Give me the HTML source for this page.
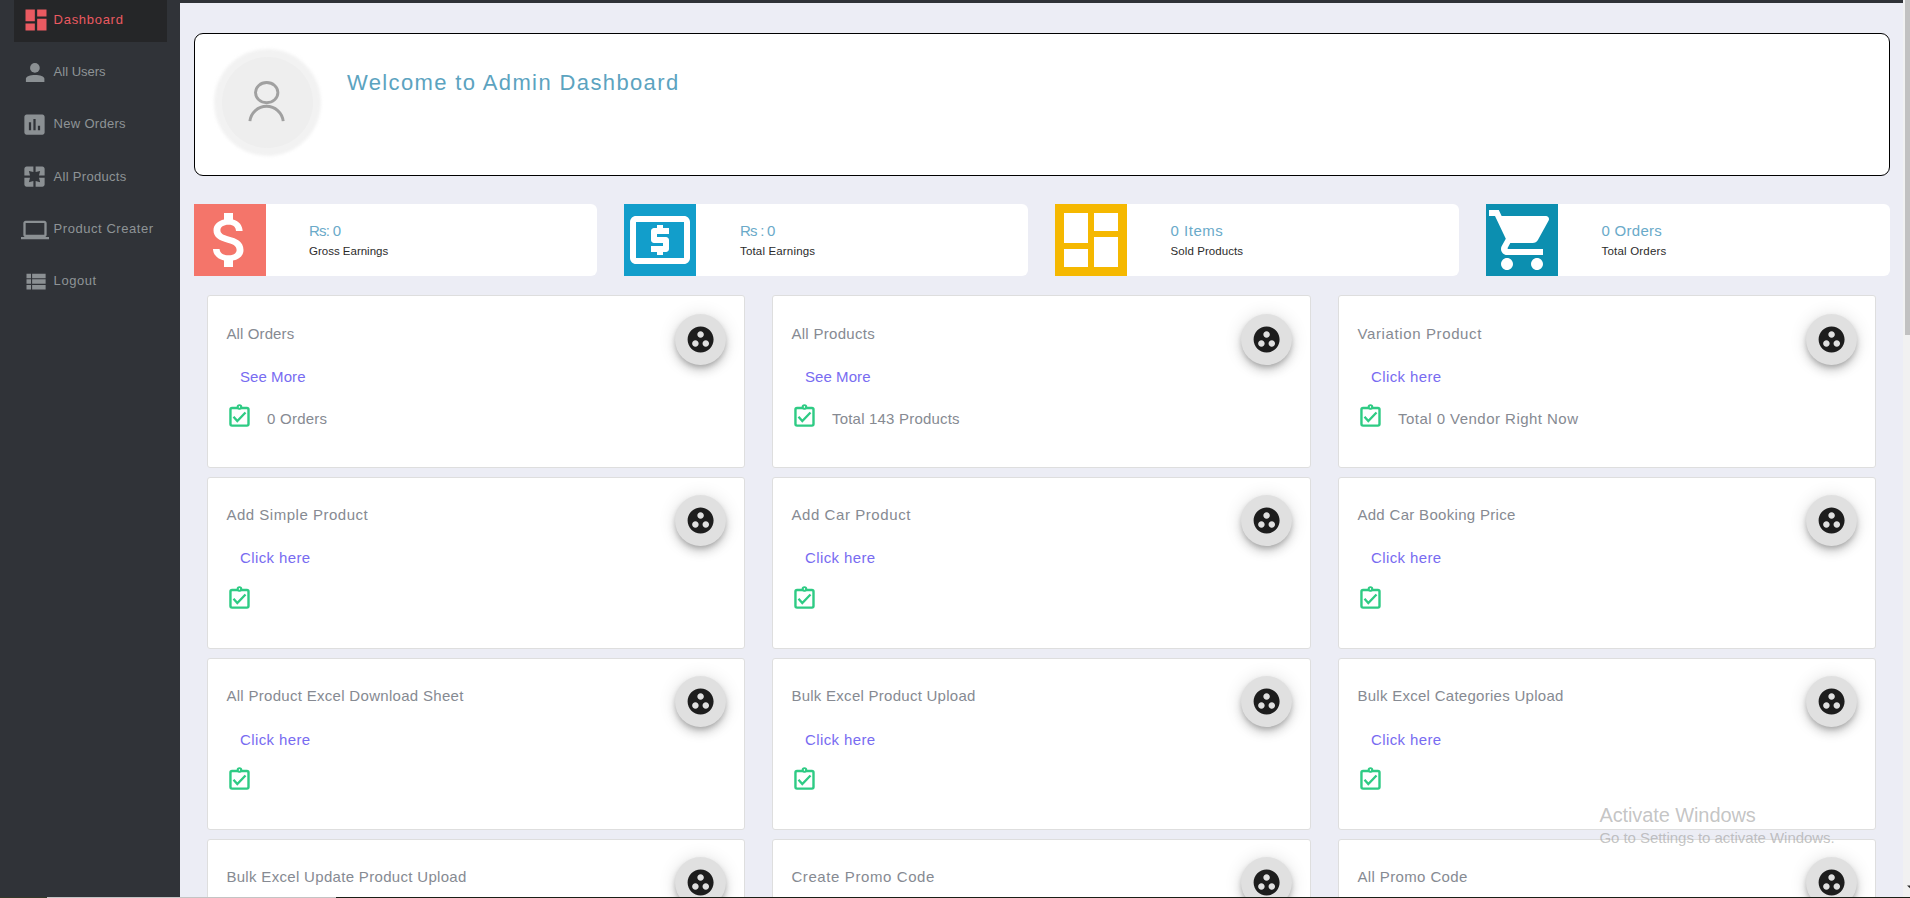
<!DOCTYPE html>
<html><head><meta charset="utf-8"><title>Admin Dashboard</title>
<style>
html,body{margin:0;padding:0;}
body{width:1910px;height:898px;overflow:hidden;position:relative;background:#ecedf5;font-family:"Liberation Sans",sans-serif;}
.t{position:absolute;white-space:nowrap;line-height:1;}
.i{position:absolute;display:block;overflow:visible;}
.fab{position:absolute;width:51px;height:51px;border-radius:50%;background:#e0e0e0;box-shadow:0 3px 5px -1px rgba(0,0,0,.2),0 6px 10px 0 rgba(0,0,0,.14),0 1px 18px 0 rgba(0,0,0,.12);}
</style></head><body>
<div style="position:absolute;left:0;top:0;width:180px;height:898px;background:#303338"></div>
<div style="position:absolute;left:14px;top:0;width:153px;height:42px;background:#252628"></div>
<svg class="i" style="left:20px;top:58px" width="30" height="30" viewBox="20 58 30 30"><circle cx="34.9" cy="67.9" r="4.85" fill="#8b9093"/><path d="M25.9 81.9V78.7C25.9 76.2 30.2 74.9 35.1 74.9S44.4 76.2 44.4 78.7V81.9Z" fill="#8b9093"/></svg>
<svg class="i" style="left:21.80px;top:6.40px" width="28" height="28" viewBox="0 0 24 24"><path fill="#ea5a61" d="M3 13h8V3H3v10zm0 8h8v-6H3v6zm10 0h8V11h-8v10zm0-18v6h8V3h-8z"/></svg>
<svg class="i" style="left:21.10px;top:110.70px" width="27" height="27" viewBox="0 0 24 24"><path fill="#8b9093" d="M19 3H5c-1.1 0-2 .9-2 2v14c0 1.1.9 2 2 2h14c1.1 0 2-.9 2-2V5c0-1.1-.9-2-2-2zM9 17H7v-7h2v7zm4 0h-2V7h2v10zm4 0h-2v-4h2v4z"/></svg>
<svg class="i" style="left:21.20px;top:162.90px" width="27" height="27" viewBox="0 0 24 24"><path fill="#8b9093" d="M3 5v6h5L7 7l4 1V3H5c-1.1 0-2 .9-2 2zm5 8H3v6c0 1.1.9 2 2 2h6v-5l-4 1 1-4zm9 4l-4-1v5h6c1.1 0 2-.9 2-2v-6h-5l1 4zm2-14h-6v5l4-1-1 4h5V5c0-1.1-.9-2-2-2z"/></svg>
<svg class="i" style="left:21.00px;top:215.60px" width="28" height="28" viewBox="0 0 24 24"><path fill="#8b9093" d="M20 18c1.1 0 1.99-.9 1.99-2L22 6c0-1.1-.9-2-2-2H4c-1.1 0-2 .9-2 2v10c0 1.1.9 2 2 2H0v2h24v-2h-4zM4 6h16v10H4V6z"/></svg>
<svg class="i" style="left:21.50px;top:267.80px" width="27" height="27" viewBox="0 0 24 24"><path fill="#8b9093" d="M4 14h4v-4H4v4zm0 5h4v-4H4v4zM4 9h4V5H4v4zm5 5h12v-4H9v4zm0 5h12v-4H9v4zM9 5v4h12V5H9z"/></svg>
<div style="position:absolute;left:180px;top:0;width:1723px;height:3px;background:#2f3237"></div>
<div style="position:absolute;left:1903px;top:0;width:7px;height:898px;background:#f1f1f1"></div>
<div style="position:absolute;left:1905px;top:0;width:5px;height:335px;background:#c1c1c1"></div>
<div style="position:absolute;left:194px;top:33px;width:1694px;height:141px;border:1px solid #000;border-radius:9px;background:#fff"></div>
<div style="position:absolute;left:214px;top:48.5px;width:107px;height:107px;border-radius:50%;background:#f2f2f2;filter:blur(1.5px)"></div>
<div style="position:absolute;left:222px;top:56.5px;width:91px;height:91px;border-radius:50%;background:#eeeeee"></div>
<svg class="i" style="left:207px;top:42px" width="120" height="120" viewBox="207 42 120 120"><ellipse cx="266.7" cy="92.6" rx="11.2" ry="10.1" fill="none" stroke="#a0a0a0" stroke-width="2.9"/><path d="M249.9 121.2A16.75 16.75 0 0 1 283.2 121.2" fill="none" stroke="#a0a0a0" stroke-width="2.9"/></svg>
<div style="position:absolute;left:194px;top:204px;width:403px;height:72px;background:#fff;border-radius:0 6px 6px 0"></div>
<div style="position:absolute;left:194px;top:204px;width:72px;height:72px;background:#f4756a"></div>
<svg class="i" style="left:194.00px;top:204.00px" width="72" height="72" viewBox="0 0 24 24"><path fill="#fff" d="M11.8 10.9c-2.27-.59-3-1.2-3-2.15 0-1.09 1.01-1.85 2.7-1.850 1.78 0 2.44.85 2.5 2.1h2.21c-.07-1.72-1.12-3.3-3.21-3.81V3h-3v2.16c-1.94.42-3.5 1.68-3.5 3.61 0 2.31 1.91 3.46 4.7 4.13 2.5.6 3 1.48 3 2.41 0 .69-.49 1.79-2.7 1.79-2.06 0-2.87-.92-2.98-2.1h-2.2c.12 2.19 1.76 3.42 3.68 3.83V21h3v-2.15c1.95-.37 3.5-1.5 3.5-3.55 0-2.84-2.43-3.81-4.7-4.4z"/></svg>
<div style="position:absolute;left:624px;top:204px;width:404px;height:72px;background:#fff;border-radius:0 6px 6px 0"></div>
<div style="position:absolute;left:624px;top:204px;width:72px;height:72px;background:#129ecb"></div>
<svg class="i" style="left:624.00px;top:204.00px" width="72" height="72" viewBox="0 0 24 24"><path fill="#fff" d="M11 17h2v-1h1c.55 0 1-.45 1-1v-3c0-.55-.45-1-1-1h-3v-1h4V8h-2V7h-2v1h-1c-.55 0-1 .45-1 1v3c0 .55.45 1 1 1h3v1H9v2h2v1zm9-13H4c-1.11 0-1.99.89-1.99 2L2 18c0 1.11.89 2 2 2h16c1.11 0 2-.89 2-2V6c0-1.11-.89-2-2-2zm0 14H4V6h16v12z"/></svg>
<div style="position:absolute;left:1055px;top:204px;width:404px;height:72px;background:#fff;border-radius:0 6px 6px 0"></div>
<div style="position:absolute;left:1055px;top:204px;width:72px;height:72px;background:#f5b800"></div>
<svg class="i" style="left:1055.00px;top:204.00px" width="72" height="72" viewBox="0 0 24 24"><path fill="#fff" d="M3 13h8V3H3v10zm0 8h8v-6H3v6zm10 0h8V11h-8v10zm0-18v6h8V3h-8z"/></svg>
<div style="position:absolute;left:1486px;top:204px;width:404px;height:72px;background:#fff;border-radius:0 6px 6px 0"></div>
<div style="position:absolute;left:1486px;top:204px;width:72px;height:72px;background:#0c8fb0"></div>
<svg class="i" style="left:1486.00px;top:204.00px" width="72" height="72" viewBox="0 0 24 24"><path fill="#fff" d="M7 18c-1.1 0-1.99.9-1.99 2S5.9 22 7 22s2-.9 2-2-.9-2-2-2zM1 2v2h2l3.6 7.59-1.35 2.45c-.16.28-.25.61-.25.96 0 1.1.9 2 2 2h12v-2H7.42c-.14 0-.25-.11-.25-.25l.03-.12.9-1.63h7.45c.75 0 1.41-.41 1.75-1.03l3.58-6.49c.08-.14.12-.31.12-.48 0-.55-.45-1-1-1H5.21l-.94-2H1zm16 16c-1.1 0-1.99.9-1.99 2s.89 2 1.99 2 2-.9 2-2-.9-2-2-2z"/></svg>
<div style="position:absolute;left:207px;top:295px;width:536px;height:171px;border:1px solid #dedede;border-radius:3px;background:#fff"></div>
<div class="fab" style="left:675.3px;top:314.0px"></div>
<svg class="i" style="left:685.20px;top:324.10px" width="31.2" height="31.2" viewBox="0 0 24 24"><path fill="#1d1d1d" d="M12 2C6.48 2 2 6.48 2 12s4.48 10 10 10 10-4.48 10-10S17.52 2 12 2zM8 17.5c-1.38 0-2.5-1.12-2.5-2.5s1.12-2.5 2.5-2.5 2.5 1.12 2.5 2.5-1.12 2.5-2.5 2.5zM9.5 8c0-1.38 1.12-2.5 2.5-2.5s2.5 1.12 2.5 2.5-1.12 2.5-2.5 2.5S9.5 9.38 9.5 8zm6.5 9.5c-1.38 0-2.5-1.12-2.5-2.5s1.12-2.5 2.5-2.5 2.5 1.12 2.5 2.5-1.12 2.5-2.5 2.5z"/></svg>
<svg class="i" style="left:227.00px;top:402.40px" width="26" height="28" viewBox="0 0 26 28"><rect x="3.45" y="6.0" width="18.05" height="17.6" rx="1.6" fill="none" stroke="#2ecb84" stroke-width="2.4"/><circle cx="12.45" cy="5.0" r="2.8" fill="#2ecb84"/><ellipse cx="12.45" cy="4.9" rx=".7" ry=".95" fill="#fff"/><path d="M6.5 14.7l3.8 4.3 8.2-8.5" fill="none" stroke="#2ecb84" stroke-width="2.3"/></svg>
<div style="position:absolute;left:772px;top:295px;width:537px;height:171px;border:1px solid #dedede;border-radius:3px;background:#fff"></div>
<div class="fab" style="left:1241.3px;top:314.0px"></div>
<svg class="i" style="left:1251.20px;top:324.10px" width="31.2" height="31.2" viewBox="0 0 24 24"><path fill="#1d1d1d" d="M12 2C6.48 2 2 6.48 2 12s4.48 10 10 10 10-4.48 10-10S17.52 2 12 2zM8 17.5c-1.38 0-2.5-1.12-2.5-2.5s1.12-2.5 2.5-2.5 2.5 1.12 2.5 2.5-1.12 2.5-2.5 2.5zM9.5 8c0-1.38 1.12-2.5 2.5-2.5s2.5 1.12 2.5 2.5-1.12 2.5-2.5 2.5S9.5 9.38 9.5 8zm6.5 9.5c-1.38 0-2.5-1.12-2.5-2.5s1.12-2.5 2.5-2.5 2.5 1.12 2.5 2.5-1.12 2.5-2.5 2.5z"/></svg>
<svg class="i" style="left:792.00px;top:402.40px" width="26" height="28" viewBox="0 0 26 28"><rect x="3.45" y="6.0" width="18.05" height="17.6" rx="1.6" fill="none" stroke="#2ecb84" stroke-width="2.4"/><circle cx="12.45" cy="5.0" r="2.8" fill="#2ecb84"/><ellipse cx="12.45" cy="4.9" rx=".7" ry=".95" fill="#fff"/><path d="M6.5 14.7l3.8 4.3 8.2-8.5" fill="none" stroke="#2ecb84" stroke-width="2.3"/></svg>
<div style="position:absolute;left:1338px;top:295px;width:536px;height:171px;border:1px solid #dedede;border-radius:3px;background:#fff"></div>
<div class="fab" style="left:1806.3px;top:314.0px"></div>
<svg class="i" style="left:1816.20px;top:324.10px" width="31.2" height="31.2" viewBox="0 0 24 24"><path fill="#1d1d1d" d="M12 2C6.48 2 2 6.48 2 12s4.48 10 10 10 10-4.48 10-10S17.52 2 12 2zM8 17.5c-1.38 0-2.5-1.12-2.5-2.5s1.12-2.5 2.5-2.5 2.5 1.12 2.5 2.5-1.12 2.5-2.5 2.5zM9.5 8c0-1.38 1.12-2.5 2.5-2.5s2.5 1.12 2.5 2.5-1.12 2.5-2.5 2.5S9.5 9.38 9.5 8zm6.5 9.5c-1.38 0-2.5-1.12-2.5-2.5s1.12-2.5 2.5-2.5 2.5 1.12 2.5 2.5-1.12 2.5-2.5 2.5z"/></svg>
<svg class="i" style="left:1358.00px;top:402.40px" width="26" height="28" viewBox="0 0 26 28"><rect x="3.45" y="6.0" width="18.05" height="17.6" rx="1.6" fill="none" stroke="#2ecb84" stroke-width="2.4"/><circle cx="12.45" cy="5.0" r="2.8" fill="#2ecb84"/><ellipse cx="12.45" cy="4.9" rx=".7" ry=".95" fill="#fff"/><path d="M6.5 14.7l3.8 4.3 8.2-8.5" fill="none" stroke="#2ecb84" stroke-width="2.3"/></svg>
<div style="position:absolute;left:207px;top:477px;width:536px;height:170px;border:1px solid #dedede;border-radius:3px;background:#fff"></div>
<div class="fab" style="left:675.3px;top:495.0px"></div>
<svg class="i" style="left:685.20px;top:505.15px" width="31.2" height="31.2" viewBox="0 0 24 24"><path fill="#1d1d1d" d="M12 2C6.48 2 2 6.48 2 12s4.48 10 10 10 10-4.48 10-10S17.52 2 12 2zM8 17.5c-1.38 0-2.5-1.12-2.5-2.5s1.12-2.5 2.5-2.5 2.5 1.12 2.5 2.5-1.12 2.5-2.5 2.5zM9.5 8c0-1.38 1.12-2.5 2.5-2.5s2.5 1.12 2.5 2.5-1.12 2.5-2.5 2.5S9.5 9.38 9.5 8zm6.5 9.5c-1.38 0-2.5-1.12-2.5-2.5s1.12-2.5 2.5-2.5 2.5 1.12 2.5 2.5-1.12 2.5-2.5 2.5z"/></svg>
<svg class="i" style="left:227.00px;top:583.60px" width="26" height="28" viewBox="0 0 26 28"><rect x="3.45" y="6.0" width="18.05" height="17.6" rx="1.6" fill="none" stroke="#2ecb84" stroke-width="2.4"/><circle cx="12.45" cy="5.0" r="2.8" fill="#2ecb84"/><ellipse cx="12.45" cy="4.9" rx=".7" ry=".95" fill="#fff"/><path d="M6.5 14.7l3.8 4.3 8.2-8.5" fill="none" stroke="#2ecb84" stroke-width="2.3"/></svg>
<div style="position:absolute;left:772px;top:477px;width:537px;height:170px;border:1px solid #dedede;border-radius:3px;background:#fff"></div>
<div class="fab" style="left:1241.3px;top:495.0px"></div>
<svg class="i" style="left:1251.20px;top:505.15px" width="31.2" height="31.2" viewBox="0 0 24 24"><path fill="#1d1d1d" d="M12 2C6.48 2 2 6.48 2 12s4.48 10 10 10 10-4.48 10-10S17.52 2 12 2zM8 17.5c-1.38 0-2.5-1.12-2.5-2.5s1.12-2.5 2.5-2.5 2.5 1.12 2.5 2.5-1.12 2.5-2.5 2.5zM9.5 8c0-1.38 1.12-2.5 2.5-2.5s2.5 1.12 2.5 2.5-1.12 2.5-2.5 2.5S9.5 9.38 9.5 8zm6.5 9.5c-1.38 0-2.5-1.12-2.5-2.5s1.12-2.5 2.5-2.5 2.5 1.12 2.5 2.5-1.12 2.5-2.5 2.5z"/></svg>
<svg class="i" style="left:792.00px;top:583.60px" width="26" height="28" viewBox="0 0 26 28"><rect x="3.45" y="6.0" width="18.05" height="17.6" rx="1.6" fill="none" stroke="#2ecb84" stroke-width="2.4"/><circle cx="12.45" cy="5.0" r="2.8" fill="#2ecb84"/><ellipse cx="12.45" cy="4.9" rx=".7" ry=".95" fill="#fff"/><path d="M6.5 14.7l3.8 4.3 8.2-8.5" fill="none" stroke="#2ecb84" stroke-width="2.3"/></svg>
<div style="position:absolute;left:1338px;top:477px;width:536px;height:170px;border:1px solid #dedede;border-radius:3px;background:#fff"></div>
<div class="fab" style="left:1806.3px;top:495.0px"></div>
<svg class="i" style="left:1816.20px;top:505.15px" width="31.2" height="31.2" viewBox="0 0 24 24"><path fill="#1d1d1d" d="M12 2C6.48 2 2 6.48 2 12s4.48 10 10 10 10-4.48 10-10S17.52 2 12 2zM8 17.5c-1.38 0-2.5-1.12-2.5-2.5s1.12-2.5 2.5-2.5 2.5 1.12 2.5 2.5-1.12 2.5-2.5 2.5zM9.5 8c0-1.38 1.12-2.5 2.5-2.5s2.5 1.12 2.5 2.5-1.12 2.5-2.5 2.5S9.5 9.38 9.5 8zm6.5 9.5c-1.38 0-2.5-1.12-2.5-2.5s1.12-2.5 2.5-2.5 2.5 1.12 2.5 2.5-1.12 2.5-2.5 2.5z"/></svg>
<svg class="i" style="left:1358.00px;top:583.60px" width="26" height="28" viewBox="0 0 26 28"><rect x="3.45" y="6.0" width="18.05" height="17.6" rx="1.6" fill="none" stroke="#2ecb84" stroke-width="2.4"/><circle cx="12.45" cy="5.0" r="2.8" fill="#2ecb84"/><ellipse cx="12.45" cy="4.9" rx=".7" ry=".95" fill="#fff"/><path d="M6.5 14.7l3.8 4.3 8.2-8.5" fill="none" stroke="#2ecb84" stroke-width="2.3"/></svg>
<div style="position:absolute;left:207px;top:658px;width:536px;height:170px;border:1px solid #dedede;border-radius:3px;background:#fff"></div>
<div class="fab" style="left:675.3px;top:676.1px"></div>
<svg class="i" style="left:685.20px;top:686.20px" width="31.2" height="31.2" viewBox="0 0 24 24"><path fill="#1d1d1d" d="M12 2C6.48 2 2 6.48 2 12s4.48 10 10 10 10-4.48 10-10S17.52 2 12 2zM8 17.5c-1.38 0-2.5-1.12-2.5-2.5s1.12-2.5 2.5-2.5 2.5 1.12 2.5 2.5-1.12 2.5-2.5 2.5zM9.5 8c0-1.38 1.12-2.5 2.5-2.5s2.5 1.12 2.5 2.5-1.12 2.5-2.5 2.5S9.5 9.38 9.5 8zm6.5 9.5c-1.38 0-2.5-1.12-2.5-2.5s1.12-2.5 2.5-2.5 2.5 1.12 2.5 2.5-1.12 2.5-2.5 2.5z"/></svg>
<svg class="i" style="left:227.00px;top:764.80px" width="26" height="28" viewBox="0 0 26 28"><rect x="3.45" y="6.0" width="18.05" height="17.6" rx="1.6" fill="none" stroke="#2ecb84" stroke-width="2.4"/><circle cx="12.45" cy="5.0" r="2.8" fill="#2ecb84"/><ellipse cx="12.45" cy="4.9" rx=".7" ry=".95" fill="#fff"/><path d="M6.5 14.7l3.8 4.3 8.2-8.5" fill="none" stroke="#2ecb84" stroke-width="2.3"/></svg>
<div style="position:absolute;left:772px;top:658px;width:537px;height:170px;border:1px solid #dedede;border-radius:3px;background:#fff"></div>
<div class="fab" style="left:1241.3px;top:676.1px"></div>
<svg class="i" style="left:1251.20px;top:686.20px" width="31.2" height="31.2" viewBox="0 0 24 24"><path fill="#1d1d1d" d="M12 2C6.48 2 2 6.48 2 12s4.48 10 10 10 10-4.48 10-10S17.52 2 12 2zM8 17.5c-1.38 0-2.5-1.12-2.5-2.5s1.12-2.5 2.5-2.5 2.5 1.12 2.5 2.5-1.12 2.5-2.5 2.5zM9.5 8c0-1.38 1.12-2.5 2.5-2.5s2.5 1.12 2.5 2.5-1.12 2.5-2.5 2.5S9.5 9.38 9.5 8zm6.5 9.5c-1.38 0-2.5-1.12-2.5-2.5s1.12-2.5 2.5-2.5 2.5 1.12 2.5 2.5-1.12 2.5-2.5 2.5z"/></svg>
<svg class="i" style="left:792.00px;top:764.80px" width="26" height="28" viewBox="0 0 26 28"><rect x="3.45" y="6.0" width="18.05" height="17.6" rx="1.6" fill="none" stroke="#2ecb84" stroke-width="2.4"/><circle cx="12.45" cy="5.0" r="2.8" fill="#2ecb84"/><ellipse cx="12.45" cy="4.9" rx=".7" ry=".95" fill="#fff"/><path d="M6.5 14.7l3.8 4.3 8.2-8.5" fill="none" stroke="#2ecb84" stroke-width="2.3"/></svg>
<div style="position:absolute;left:1338px;top:658px;width:536px;height:170px;border:1px solid #dedede;border-radius:3px;background:#fff"></div>
<div class="fab" style="left:1806.3px;top:676.1px"></div>
<svg class="i" style="left:1816.20px;top:686.20px" width="31.2" height="31.2" viewBox="0 0 24 24"><path fill="#1d1d1d" d="M12 2C6.48 2 2 6.48 2 12s4.48 10 10 10 10-4.48 10-10S17.52 2 12 2zM8 17.5c-1.38 0-2.5-1.12-2.5-2.5s1.12-2.5 2.5-2.5 2.5 1.12 2.5 2.5-1.12 2.5-2.5 2.5zM9.5 8c0-1.38 1.12-2.5 2.5-2.5s2.5 1.12 2.5 2.5-1.12 2.5-2.5 2.5S9.5 9.38 9.5 8zm6.5 9.5c-1.38 0-2.5-1.12-2.5-2.5s1.12-2.5 2.5-2.5 2.5 1.12 2.5 2.5-1.12 2.5-2.5 2.5z"/></svg>
<svg class="i" style="left:1358.00px;top:764.80px" width="26" height="28" viewBox="0 0 26 28"><rect x="3.45" y="6.0" width="18.05" height="17.6" rx="1.6" fill="none" stroke="#2ecb84" stroke-width="2.4"/><circle cx="12.45" cy="5.0" r="2.8" fill="#2ecb84"/><ellipse cx="12.45" cy="4.9" rx=".7" ry=".95" fill="#fff"/><path d="M6.5 14.7l3.8 4.3 8.2-8.5" fill="none" stroke="#2ecb84" stroke-width="2.3"/></svg>
<div style="position:absolute;left:207px;top:839px;width:536px;height:170px;border:1px solid #dedede;border-radius:3px;background:#fff"></div>
<div class="fab" style="left:675.3px;top:857.2px"></div>
<svg class="i" style="left:685.20px;top:867.25px" width="31.2" height="31.2" viewBox="0 0 24 24"><path fill="#1d1d1d" d="M12 2C6.48 2 2 6.48 2 12s4.48 10 10 10 10-4.48 10-10S17.52 2 12 2zM8 17.5c-1.38 0-2.5-1.12-2.5-2.5s1.12-2.5 2.5-2.5 2.5 1.12 2.5 2.5-1.12 2.5-2.5 2.5zM9.5 8c0-1.38 1.12-2.5 2.5-2.5s2.5 1.12 2.5 2.5-1.12 2.5-2.5 2.5S9.5 9.38 9.5 8zm6.5 9.5c-1.38 0-2.5-1.12-2.5-2.5s1.12-2.5 2.5-2.5 2.5 1.12 2.5 2.5-1.12 2.5-2.5 2.5z"/></svg>
<svg class="i" style="left:227.00px;top:946.00px" width="26" height="28" viewBox="0 0 26 28"><rect x="3.45" y="6.0" width="18.05" height="17.6" rx="1.6" fill="none" stroke="#2ecb84" stroke-width="2.4"/><circle cx="12.45" cy="5.0" r="2.8" fill="#2ecb84"/><ellipse cx="12.45" cy="4.9" rx=".7" ry=".95" fill="#fff"/><path d="M6.5 14.7l3.8 4.3 8.2-8.5" fill="none" stroke="#2ecb84" stroke-width="2.3"/></svg>
<div style="position:absolute;left:772px;top:839px;width:537px;height:170px;border:1px solid #dedede;border-radius:3px;background:#fff"></div>
<div class="fab" style="left:1241.3px;top:857.2px"></div>
<svg class="i" style="left:1251.20px;top:867.25px" width="31.2" height="31.2" viewBox="0 0 24 24"><path fill="#1d1d1d" d="M12 2C6.48 2 2 6.48 2 12s4.48 10 10 10 10-4.48 10-10S17.52 2 12 2zM8 17.5c-1.38 0-2.5-1.12-2.5-2.5s1.12-2.5 2.5-2.5 2.5 1.12 2.5 2.5-1.12 2.5-2.5 2.5zM9.5 8c0-1.38 1.12-2.5 2.5-2.5s2.5 1.12 2.5 2.5-1.12 2.5-2.5 2.5S9.5 9.38 9.5 8zm6.5 9.5c-1.38 0-2.5-1.12-2.5-2.5s1.12-2.5 2.5-2.5 2.5 1.12 2.5 2.5-1.12 2.5-2.5 2.5z"/></svg>
<svg class="i" style="left:792.00px;top:946.00px" width="26" height="28" viewBox="0 0 26 28"><rect x="3.45" y="6.0" width="18.05" height="17.6" rx="1.6" fill="none" stroke="#2ecb84" stroke-width="2.4"/><circle cx="12.45" cy="5.0" r="2.8" fill="#2ecb84"/><ellipse cx="12.45" cy="4.9" rx=".7" ry=".95" fill="#fff"/><path d="M6.5 14.7l3.8 4.3 8.2-8.5" fill="none" stroke="#2ecb84" stroke-width="2.3"/></svg>
<div style="position:absolute;left:1338px;top:839px;width:536px;height:170px;border:1px solid #dedede;border-radius:3px;background:#fff"></div>
<div class="fab" style="left:1806.3px;top:857.2px"></div>
<svg class="i" style="left:1816.20px;top:867.25px" width="31.2" height="31.2" viewBox="0 0 24 24"><path fill="#1d1d1d" d="M12 2C6.48 2 2 6.48 2 12s4.48 10 10 10 10-4.48 10-10S17.52 2 12 2zM8 17.5c-1.38 0-2.5-1.12-2.5-2.5s1.12-2.5 2.5-2.5 2.5 1.12 2.5 2.5-1.12 2.5-2.5 2.5zM9.5 8c0-1.38 1.12-2.5 2.5-2.5s2.5 1.12 2.5 2.5-1.12 2.5-2.5 2.5S9.5 9.38 9.5 8zm6.5 9.5c-1.38 0-2.5-1.12-2.5-2.5s1.12-2.5 2.5-2.5 2.5 1.12 2.5 2.5-1.12 2.5-2.5 2.5z"/></svg>
<svg class="i" style="left:1358.00px;top:946.00px" width="26" height="28" viewBox="0 0 26 28"><rect x="3.45" y="6.0" width="18.05" height="17.6" rx="1.6" fill="none" stroke="#2ecb84" stroke-width="2.4"/><circle cx="12.45" cy="5.0" r="2.8" fill="#2ecb84"/><ellipse cx="12.45" cy="4.9" rx=".7" ry=".95" fill="#fff"/><path d="M6.5 14.7l3.8 4.3 8.2-8.5" fill="none" stroke="#2ecb84" stroke-width="2.3"/></svg>
<div class="t" style="left:53.6px;top:12.90px;font-size:13px;letter-spacing:0.713px;color:#ea5a61;">Dashboard</div>
<div class="t" style="left:53.6px;top:65.00px;font-size:13px;letter-spacing:-0.001px;color:#8e9396;">All Users</div>
<div class="t" style="left:53.6px;top:116.90px;font-size:13px;letter-spacing:0.295px;color:#8e9396;">New Orders</div>
<div class="t" style="left:53.6px;top:170.00px;font-size:13px;letter-spacing:0.294px;color:#8e9396;">All Products</div>
<div class="t" style="left:53.6px;top:222.00px;font-size:13px;letter-spacing:0.546px;color:#8e9396;">Product Creater</div>
<div class="t" style="left:53.6px;top:274.00px;font-size:13px;letter-spacing:0.568px;color:#8e9396;">Logout</div>
<div class="t" style="left:346.9px;top:72.18px;font-size:22px;letter-spacing:1.382px;color:#5ca3bf;">Welcome to Admin Dashboard</div>
<div class="t" style="left:309.0px;top:222.60px;font-size:15px;letter-spacing:-0.753px;color:#6aaac9;">Rs: 0</div>
<div class="t" style="left:309.0px;top:245.57px;font-size:11.5px;letter-spacing:-0.004px;color:#2b2b2b;">Gross Earnings</div>
<div class="t" style="left:740.0px;top:222.60px;font-size:15px;letter-spacing:-0.776px;color:#6aaac9;">Rs : 0</div>
<div class="t" style="left:740.0px;top:245.57px;font-size:11.5px;letter-spacing:0.163px;color:#2b2b2b;">Total Earnings</div>
<div class="t" style="left:1170.6px;top:222.60px;font-size:15px;letter-spacing:0.503px;color:#6aaac9;">0 Items</div>
<div class="t" style="left:1170.6px;top:245.57px;font-size:11.5px;letter-spacing:0.075px;color:#2b2b2b;">Sold Products</div>
<div class="t" style="left:1601.5px;top:222.60px;font-size:15px;letter-spacing:0.278px;color:#6aaac9;">0 Orders</div>
<div class="t" style="left:1601.5px;top:245.57px;font-size:11.5px;letter-spacing:0.197px;color:#2b2b2b;">Total Orders</div>
<div class="t" style="left:226.4px;top:326.20px;font-size:15px;letter-spacing:0.124px;color:#868a92;">All Orders</div>
<div class="t" style="left:240.0px;top:369.40px;font-size:15px;letter-spacing:0.067px;color:#786cf1;">See More</div>
<div class="t" style="left:267.0px;top:411.30px;font-size:15px;letter-spacing:0.250px;color:#868a92;">0 Orders</div>
<div class="t" style="left:791.4px;top:326.20px;font-size:15px;letter-spacing:0.297px;color:#868a92;">All Products</div>
<div class="t" style="left:805.0px;top:369.40px;font-size:15px;letter-spacing:0.067px;color:#786cf1;">See More</div>
<div class="t" style="left:832.0px;top:411.30px;font-size:15px;letter-spacing:0.198px;color:#868a92;">Total 143 Products</div>
<div class="t" style="left:1357.4px;top:326.20px;font-size:15px;letter-spacing:0.628px;color:#868a92;">Variation Product</div>
<div class="t" style="left:1371.0px;top:369.40px;font-size:15px;letter-spacing:0.379px;color:#786cf1;">Click here</div>
<div class="t" style="left:1398.0px;top:411.30px;font-size:15px;letter-spacing:0.467px;color:#868a92;">Total 0 Vendor Right Now</div>
<div class="t" style="left:226.4px;top:507.25px;font-size:15px;letter-spacing:0.519px;color:#868a92;">Add Simple Product</div>
<div class="t" style="left:240.0px;top:550.45px;font-size:15px;letter-spacing:0.379px;color:#786cf1;">Click here</div>
<div class="t" style="left:791.4px;top:507.25px;font-size:15px;letter-spacing:0.579px;color:#868a92;">Add Car Product</div>
<div class="t" style="left:805.0px;top:550.45px;font-size:15px;letter-spacing:0.379px;color:#786cf1;">Click here</div>
<div class="t" style="left:1357.4px;top:507.25px;font-size:15px;letter-spacing:0.313px;color:#868a92;">Add Car Booking Price</div>
<div class="t" style="left:1371.0px;top:550.45px;font-size:15px;letter-spacing:0.379px;color:#786cf1;">Click here</div>
<div class="t" style="left:226.4px;top:688.30px;font-size:15px;letter-spacing:0.302px;color:#868a92;">All Product Excel Download Sheet</div>
<div class="t" style="left:240.0px;top:731.50px;font-size:15px;letter-spacing:0.379px;color:#786cf1;">Click here</div>
<div class="t" style="left:791.4px;top:688.30px;font-size:15px;letter-spacing:0.267px;color:#868a92;">Bulk Excel Product Upload</div>
<div class="t" style="left:805.0px;top:731.50px;font-size:15px;letter-spacing:0.379px;color:#786cf1;">Click here</div>
<div class="t" style="left:1357.4px;top:688.30px;font-size:15px;letter-spacing:0.280px;color:#868a92;">Bulk Excel Categories Upload</div>
<div class="t" style="left:1371.0px;top:731.50px;font-size:15px;letter-spacing:0.379px;color:#786cf1;">Click here</div>
<div class="t" style="left:226.4px;top:869.35px;font-size:15px;letter-spacing:0.318px;color:#868a92;">Bulk Excel Update Product Upload</div>
<div class="t" style="left:240.0px;top:912.55px;font-size:15px;letter-spacing:0.379px;color:#786cf1;">Click here</div>
<div class="t" style="left:791.4px;top:869.35px;font-size:15px;letter-spacing:0.600px;color:#868a92;">Create Promo Code</div>
<div class="t" style="left:805.0px;top:912.55px;font-size:15px;letter-spacing:0.379px;color:#786cf1;">Click here</div>
<div class="t" style="left:1357.4px;top:869.35px;font-size:15px;letter-spacing:0.381px;color:#868a92;">All Promo Code</div>
<div class="t" style="left:1371.0px;top:912.55px;font-size:15px;letter-spacing:0.379px;color:#786cf1;">Click here</div>
<div class="t" style="left:1599.4px;top:804.97px;font-size:20px;letter-spacing:-0.096px;color:rgba(160,160,160,.62);">Activate Windows</div>
<div class="t" style="left:1599.4px;top:829.80px;font-size:15px;letter-spacing:-0.043px;color:rgba(160,160,160,.62);">Go to Settings to activate Windows.</div>
<svg class="i" style="left:1906px;top:884px" width="4" height="5" viewBox="0 0 4 5"><path d="M1 1.5L4 1.5L4 4.2Z" fill="#2a2a2a"/></svg>
<div style="position:absolute;left:0;top:897px;width:47px;height:1px;background:#343a2a"></div>
<div style="position:absolute;left:47px;top:897px;width:289px;height:1px;background:#c4c4c4"></div>
<div style="position:absolute;left:336px;top:897px;width:1574px;height:1px;background:#1b1f16"></div>
</body></html>
